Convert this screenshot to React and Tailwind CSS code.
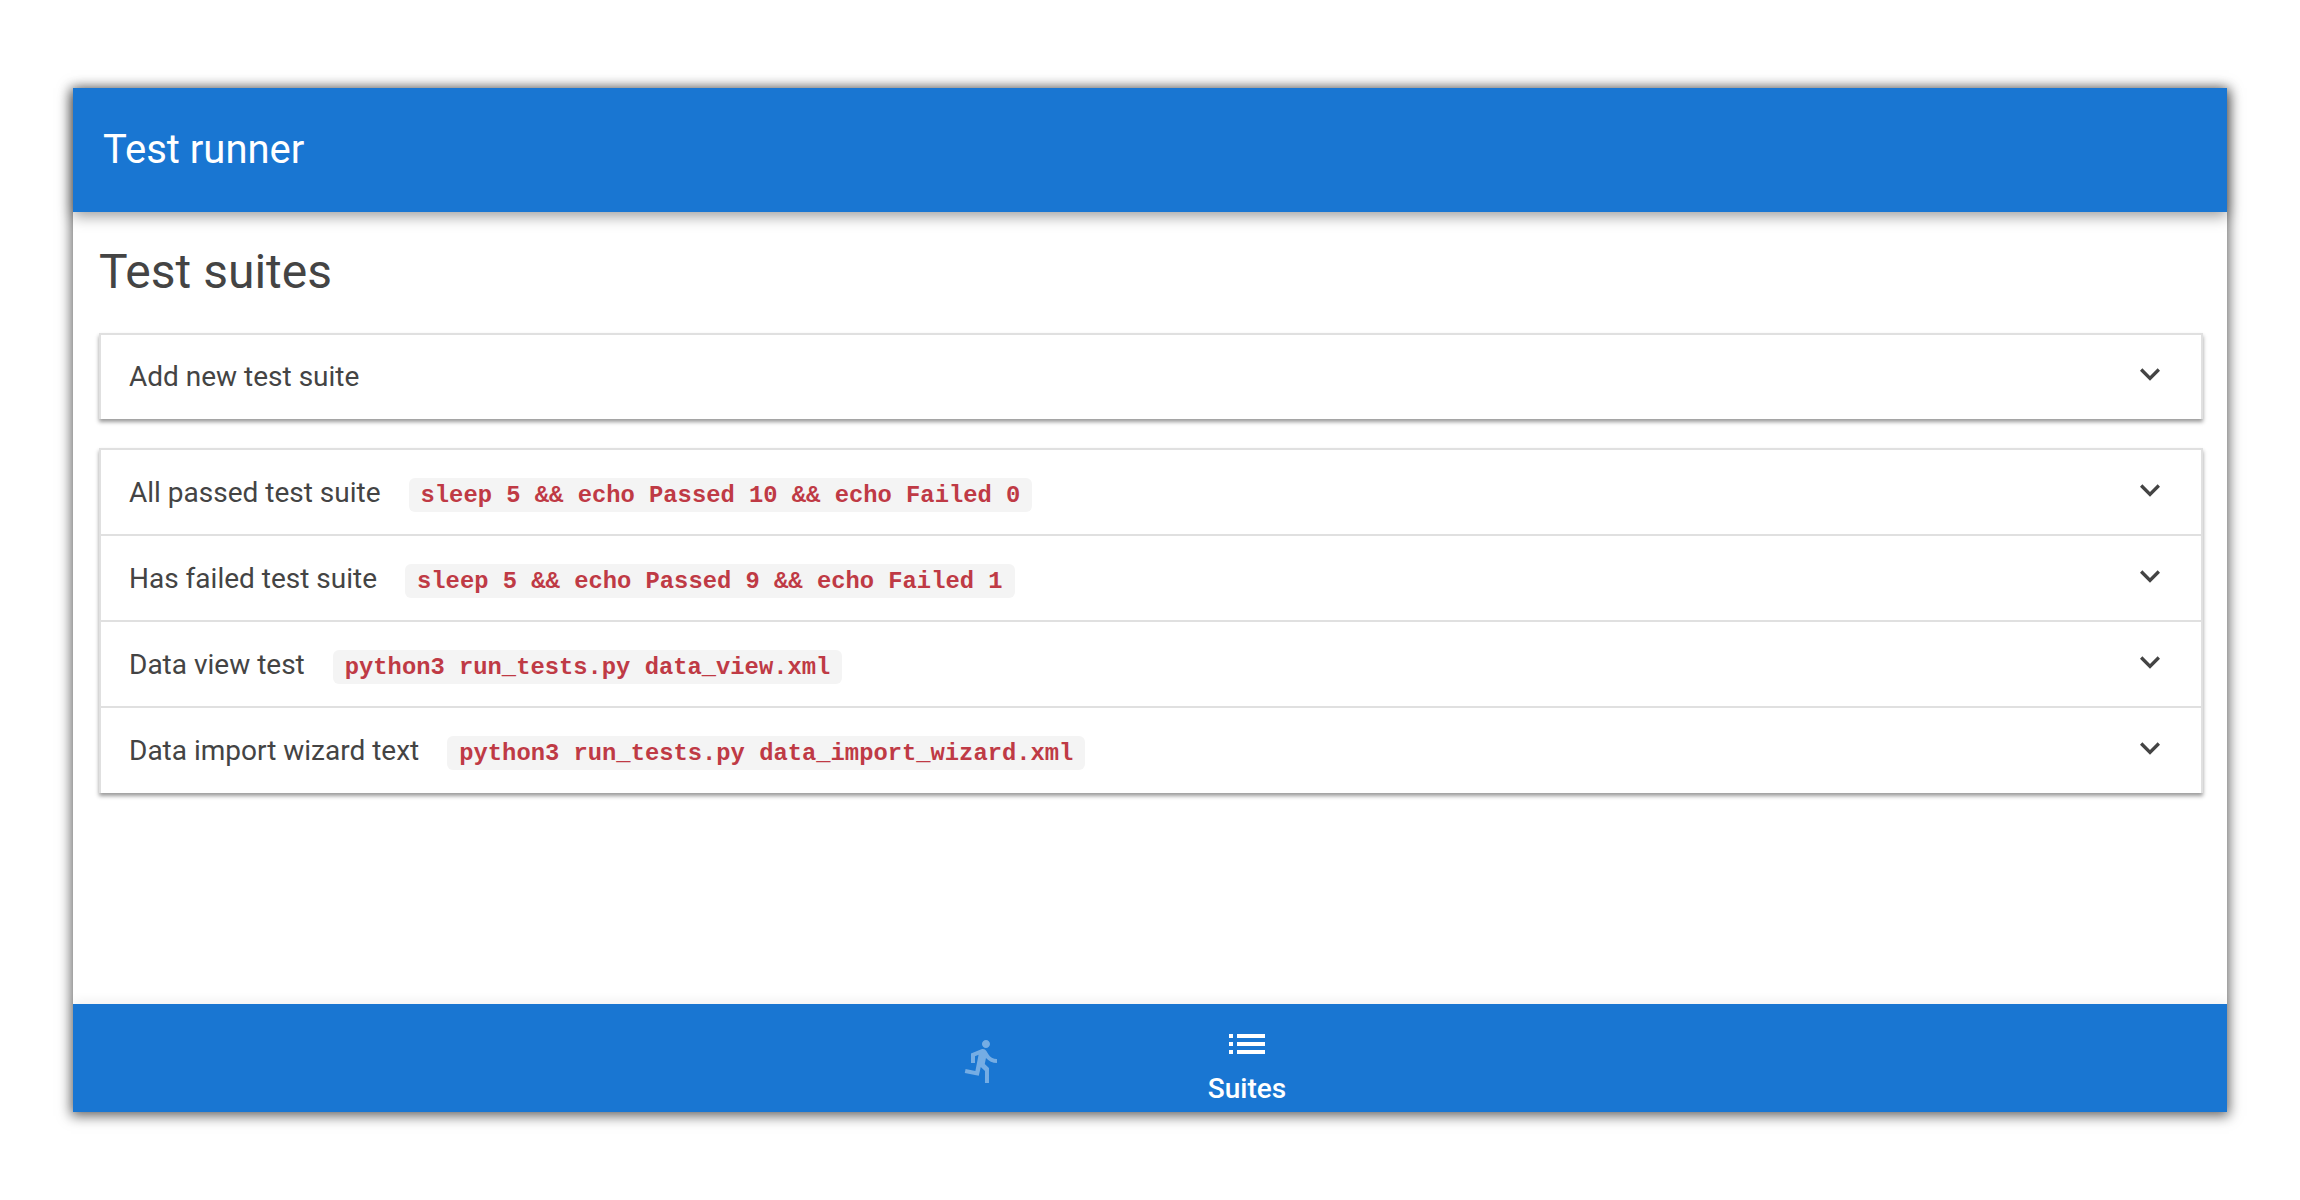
const suites = [
  { name: "All passed test suite", command: "sleep 5 && echo Passed 10 && echo Failed 0" },
  { name: "Has failed test suite", command: "sleep 5 && echo Passed 9 && echo Failed 1" },
  { name: "Data view test", command: "python3 run_tests.py data_view.xml" },
  { name: "Data import wizard text", command: "python3 run_tests.py data_import_wizard.xml" },
];

function ExpandIcon() {
  return (
    <svg viewBox="0 0 24 24" className="h-10 w-10 fill-[#444444]">
      <path d="M16.59 8.59L12 13.17 7.41 8.59 6 10l6 6 6-6z" />
    </svg>
  );
}

function Row({ name, command, divider }) {
  return (
    <div className={`flex items-center justify-between pl-[28px] pr-[31px] ${divider ? "h-[86px] border-t-2 border-[#e0e0e0]" : "h-[84px]"} ${command ? "pt-[2px]" : ""}`}>
      <div className="flex items-center">
        <span className="text-[28px] leading-[40px] text-[#444444]">{name}</span>
        {command && (
          <code className="ml-[28px] mt-[3px] rounded-[6px] bg-[#f4f4f4] px-[12px] pt-[2px] font-['Liberation_Mono',monospace] text-[23.8px] leading-[32px] font-bold text-[#bf3a45]">
            {command}
          </code>
        )}
      </div>
      <div className="-mt-[6px]">
        <ExpandIcon />
      </div>
    </div>
  );
}

export default function App() {
  return (
    <div className="h-[1200px] bg-white px-[73px] py-[88px] font-['Roboto',sans-serif]">
      <div className="flex h-[1024px] flex-col shadow-[0_2px_12px_2px_rgba(0,0,0,0.6)]">
        <header className="relative z-10 flex h-[124px] shrink-0 items-center bg-[#1976d2] px-[30px] shadow-[0_4px_14px_rgba(0,0,0,0.4)]">
          <h1 className="text-[40px] font-normal text-white">Test runner</h1>
        </header>

        <main className="flex-1 bg-white pl-[26px] pr-[24px]">
          <h2 className="pt-[26px] text-[48px] leading-[68px] font-normal text-[#444444]">Test suites</h2>
          <div className="mt-[27px] border-2 border-b-0 border-[#e0e0e0] bg-white shadow-[0_3px_4px_rgba(0,0,0,0.4)]">
            <Row name="Add new test suite" />
          </div>
          <div className="mt-[29px] border-2 border-b-0 border-[#e0e0e0] bg-white pb-[1px] shadow-[0_3px_4px_rgba(0,0,0,0.4)]">
            {suites.map((suite, index) => (
              <Row key={suite.name} name={suite.name} command={suite.command} divider={index > 0} />
            ))}
          </div>
        </main>

        <nav className="relative flex h-[108px] shrink-0 justify-center bg-[#1976d2] pr-[72px] shadow-[0_-4px_10px_rgba(0,0,0,0.05)]">
          <div className="flex w-[266px] items-center justify-center pl-[3px] pt-[5px]">
            <svg viewBox="0 0 24 24" className="h-12 w-12 fill-white opacity-40">
              <path d="M13.49 5.48c1.1 0 2-.9 2-2s-.9-2-2-2-2 .9-2 2 .9 2 2 2zm-3.6 13.9l1-4.4 2.1 2v6h2v-7.5l-2.1-2 .6-3c1.3 1.5 3.3 2.5 5.5 2.5v-2c-1.9 0-3.5-1-4.3-2.4l-1-1.6c-.4-.6-1-1-1.7-1-.3 0-.5.1-.8.1l-5.2 2.2v4.7h2v-3.4l1.8-.7-1.6 8.1-4.9-1-.4 2 7 1.4z" />
            </svg>
          </div>
          <div className="flex w-[266px] flex-col items-center pt-[16px]">
            <svg viewBox="0 0 24 24" className="h-12 w-12 fill-white">
              <path d="M3 13h2v-2H3v2zm0 4h2v-2H3v2zm0-8h2V7H3v2zm4 4h14v-2H7v2zm0 4h14v-2H7v2zM7 7v2h14V7H7z" />
            </svg>
            <span className="mt-[5px] text-[28px] leading-[32px] font-medium text-white">Suites</span>
          </div>
        </nav>
      </div>
    </div>
  );
}
